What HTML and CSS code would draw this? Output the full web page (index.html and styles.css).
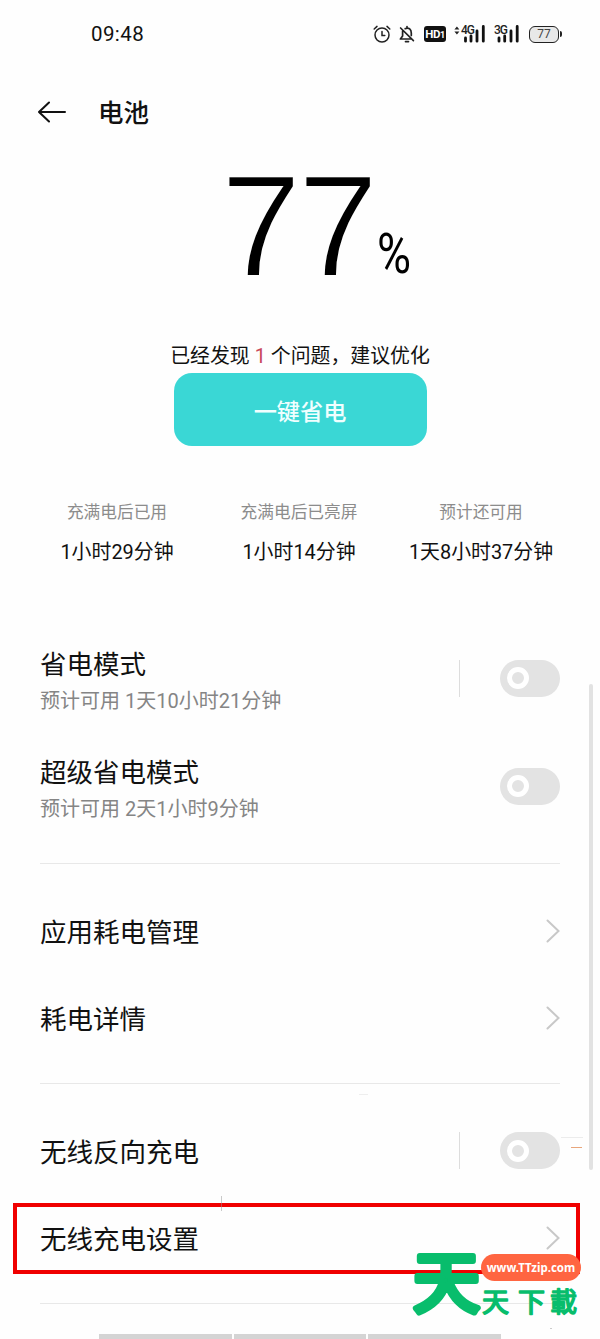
FILE: index.html
```html
<!DOCTYPE html>
<html lang="zh-CN">
<head>
    <meta charset="UTF-8">
    <meta name="viewport" content="width=device-width, initial-scale=1.0">
    <title>电池</title>
    <link rel="stylesheet" href="styles.css">
</head>
<body>
    <div class="status-bar">
        <span class="time">09:48</span>
        <div class="status-icons">
            <svg class="alarm" width="18" height="20" viewBox="0 0 18 20" fill="none" stroke="#222" stroke-width="1.5" stroke-linecap="round">
                <circle cx="9" cy="11" r="7"/>
                <path d="M9 7.5V11.5H11.8M1.2 5L4 2.4M16.8 5L14 2.4"/>
            </svg>
            <svg class="bell" width="16" height="20" viewBox="0 0 16 20" fill="none" stroke="#222" stroke-width="1.7" stroke-linecap="round" stroke-linejoin="round">
                <path d="M6.2 4.6C10 3 12.3 5.6 12.3 9V11.5M3.6 7.2V12L1.4 15H12.5M8 2.5V4M6.5 17.6H9.5M1.6 4L14.4 16.6"/>
            </svg>
            <span class="hd">HD<small>1</small></span>
            <div class="signal signal-4g">
                <svg width="32" height="20" viewBox="0 0 32 20">
                    <path d="M0.4 5.6L2.9 2.6L5.4 5.6ZM0.4 7.4L2.9 10.4L5.4 7.4Z" fill="#222"/>
                    <path d="M11.5 14V17.2M17 12V17.2M23 7V17.2M29.3 2.5V17.2" stroke="#111" stroke-width="2.8" stroke-linecap="round"/>
                </svg>
                <span>4G</span>
            </div>
            <div class="signal signal-3g">
                <svg width="26" height="20" viewBox="0 0 26 20">
                    <path d="M5 14V17.2M10.7 12V17.2M17 7V17.2M23.2 2.5V17.2" stroke="#111" stroke-width="2.8" stroke-linecap="round"/>
                </svg>
                <span>3G</span>
            </div>
            <span class="battery">77</span>
        </div>
    </div>

    <header>
        <svg width="28" height="22" viewBox="0 0 28 22" fill="none" stroke="#111" stroke-width="2" stroke-linecap="round" stroke-linejoin="round">
            <path d="M27 11H1M11 1.5L1 11L11 20.5"/>
        </svg>
        <h1>电池</h1>
    </header>

    <div class="level">
        <span class="number">77</span>
        <span class="percent">%</span>
    </div>

    <p class="tip">已经发现 <b>1</b> 个问题，建议优化</p>
    <button class="save-button">一键省电</button>

    <div class="stats">
        <div class="stat">
            <span class="label">充满电后已用</span>
            <span class="value">1小时29分钟</span>
        </div>
        <div class="stat">
            <span class="label">充满电后已亮屏</span>
            <span class="value">1小时14分钟</span>
        </div>
        <div class="stat">
            <span class="label">预计还可用</span>
            <span class="value">1天8小时37分钟</span>
        </div>
    </div>

    <div class="group modes">
        <div class="row">
            <div class="text">
                <h2>省电模式</h2>
                <p>预计可用 1天10小时21分钟</p>
            </div>
            <i class="split"></i>
            <span class="toggle"></span>
        </div>
        <div class="row">
            <div class="text">
                <h2>超级省电模式</h2>
                <p>预计可用 2天1小时9分钟</p>
            </div>
            <span class="toggle"></span>
        </div>
    </div>

    <div class="group usage">
        <div class="row">
            <h2>应用耗电管理</h2>
            <svg class="arrow" width="14" height="24" viewBox="0 0 14 24"><path d="M1.5 1.5L12.5 12L1.5 22.5"/></svg>
        </div>
        <div class="row">
            <h2>耗电详情</h2>
            <svg class="arrow" width="14" height="24" viewBox="0 0 14 24"><path d="M1.5 1.5L12.5 12L1.5 22.5"/></svg>
        </div>
    </div>

    <div class="group wireless">
        <div class="row">
            <h2>无线反向充电</h2>
            <i class="split"></i>
            <span class="toggle"></span>
        </div>
        <div class="row">
            <h2>无线充电设置</h2>
            <svg class="arrow" width="14" height="24" viewBox="0 0 14 24"><path d="M1.5 1.5L12.5 12L1.5 22.5"/></svg>
        </div>
    </div>

    <div class="nav-bar"><i></i><i></i><i></i></div>

    <!-- things lying over the page -->
    <div class="scrollbar"></div>
    <div class="highlight"></div>
    <div class="mark mark-line"></div>
    <div class="mark mark-side"></div>
    <div class="mark mark-orange"></div>
    <div class="mark mark-top"></div>
    <div class="mark mark-dot"></div>
    <div class="watermark">
        <svg width="174" height="93" viewBox="0 -17 174 93">
            <text class="big" x="3" y="61">天</text>
            <text class="small" x="72 108 140" y="66">天下載</text>
        </svg>
        <span class="site">www.TTzip.com</span>
    </div>
</body>
</html>
```
FILE: styles.css
```css
*, *::before, *::after {
    box-sizing: border-box;
}
body {
    font-family: Roboto, "Noto Sans CJK SC", sans-serif;
    position: relative;
    width: 600px;
    height: 1339px;
    margin: 0;
    overflow: hidden;
    background-color: #fefefe;
    color: #111;
}
h1, h2, p {
    margin: 0;
    font-weight: 400;
}

/* status bar */
.status-bar {
    display: flex;
    align-items: center;
    justify-content: space-between;
    height: 68px;
    padding: 0 38px 0 91px;
}
.time {
    font-size: 20.5px;
    letter-spacing: 0.4px;
}
.status-icons {
    display: flex;
    align-items: center;
}
.bell {
    margin-left: 8px;
}
.hd {
    width: 22px;
    height: 16px;
    margin-left: 9px;
    border-radius: 3px;
    background: #111;
    color: #fff;
    font-size: 11.5px;
    font-weight: 700;
    line-height: 16px;
    text-align: center;
    letter-spacing: -0.5px;
}
.hd small {
    font-size: 9px;
}
.signal {
    position: relative;
    height: 20px;
    margin-left: 8px;
}
.signal svg {
    display: block;
}
.signal span {
    position: absolute;
    top: 0;
    left: 7px;
    color: #222;
    font-size: 12px;
    line-height: 12px;
    letter-spacing: -1px;
    font-weight: 500;
}
.signal-3g span {
    left: 0;
}
.battery {
    position: relative;
    width: 30px;
    height: 17px;
    margin: 0 3px 0 9px;
    border: 1.8px solid #222;
    border-radius: 6px;
    background: #e8e8e8;
    color: #444;
    font-size: 12px;
    line-height: 15px;
    text-align: center;
}
.battery::after {
    content: "";
    position: absolute;
    top: 4px;
    right: -4px;
    width: 2px;
    height: 6px;
    border-radius: 0 2px 2px 0;
    background: #222;
}

header {
    display: flex;
    align-items: center;
    height: 88px;
    padding-left: 38px;
}
h1 {
    margin-left: 32px;
    padding-bottom: 3px;
    font-size: 25.5px;
    font-weight: 500;
}

/* battery level */
.level {
    display: flex;
    height: 185px;
    padding-left: 221px;
    color: #000;
}
.number {
    width: 156px;
    font-family: "Liberation Sans", sans-serif;
    font-size: 144px;
    line-height: 142px;
    letter-spacing: -3px;
    /* page-coloured outline keeps the digits light */
    -webkit-text-stroke: 2px #fefefe;
}
.percent {
    width: 40px;
    padding-top: 68px;
    font-size: 56px;
    line-height: 60px;
    transform: scaleX(0.83);
    transform-origin: 0 0;
}
.tip {
    height: 32px;
    font-size: 19.9px;
    line-height: 32px;
    text-align: center;
}
.save-button {
    display: block;
    width: 253px;
    height: 73px;
    margin: 0 auto;
    padding: 0;
    border: none;
    border-radius: 18px;
    background: #3ad7d5;
    color: #f0ffff;
    font-family: inherit;
    font-size: 23.2px;
    font-weight: 500;
}
.tip b {
    color: #c8475b;
    font-weight: 400;
}
.stats {
    display: flex;
    height: 178px;
    padding: 54px 28px 0 26px;
}
.stat {
    display: flex;
    flex: 1;
    flex-direction: column;
    align-items: center;
    white-space: nowrap;
}
.label {
    height: 40px;
    color: #8c8c8c;
    font-size: 16.7px;
    line-height: 26px;
}
.value {
    font-size: 19.9px;
    line-height: 26px;
}

/* settings list */
.group {
    margin: 0 40px;
    border-bottom: 1px solid #e8e8e8;
}
.row {
    display: flex;
    align-items: center;
    height: 87px;
}
.modes {
    height: 240px;
}
.modes .row {
    height: 108px;
}
.usage {
    height: 220px;
    padding-top: 23px;
}
.wireless {
    height: 220px;
    padding-top: 23px;
}
.row h2 {
    flex: 1;
    padding-top: 4px;
    font-size: 26.5px;
    line-height: 36px;
}
.text {
    flex: 1;
    padding-top: 8px;
}
.row .text h2 {
    padding-top: 2px;
}
.text p {
    color: #858585;
    font-size: 20px;
    line-height: 37px;
}
.split {
    width: 1.5px;
    height: 37px;
    margin-right: 40px;
    background: #ddd;
}
.toggle {
    display: flex;
    align-items: center;
    width: 60px;
    height: 37px;
    padding-left: 7px;
    border-radius: 19px;
    background: #e3e3e3;
}
.toggle::before {
    content: "";
    width: 22px;
    height: 22px;
    border: 5px solid #fff;
    border-radius: 50%;
}
.arrow {
    fill: none;
    stroke: #c8c8c8;
    stroke-width: 2;
    stroke-linecap: round;
}

.nav-bar {
    display: flex;
    gap: 2px;
    margin: 30px 99px 0;
}
.nav-bar i {
    flex: 1;
    height: 5px;
    background: #d4d4d4;
}

.scrollbar {
    position: absolute;
    top: 684px;
    left: 589px;
    width: 4px;
    height: 486px;
    border-radius: 2px;
    background: #e2e2e2;
}
.highlight {
    position: absolute;
    top: 1203px;
    left: 13px;
    width: 567px;
    height: 71px;
    border: 4px solid #f00000;
}
.mark {
    position: absolute;
}
.mark-line {
    top: 1196px;
    left: 221px;
    width: 1px;
    height: 15px;
    background: rgba(150, 150, 150, 0.5);
}
.mark-side {
    top: 1137px;
    left: 561px;
    width: 22px;
    height: 1px;
    background: #ececec;
}
.mark-orange {
    top: 1147px;
    left: 571px;
    width: 11px;
    height: 1px;
    background: #e8a67c;
}
.mark-top {
    top: 1094px;
    left: 359px;
    width: 9px;
    height: 1px;
    background: #eee;
}
.mark-dot {
    top: 1328px;
    left: 550px;
    width: 2px;
    height: 1px;
    background: #ccc;
}

/* site watermark */
.watermark {
    position: absolute;
    top: 1229px;
    left: 410px;
    width: 174px;
    height: 93px;
}
.watermark text {
    fill: #08bd6c;
    stroke: #08bd6c;
    stroke-linejoin: round;
    font-family: "Noto Sans CJK TC", sans-serif;
}
.big {
    font-size: 67px;
    stroke-width: 6px;
}
.small {
    font-size: 27px;
    stroke-width: 1.6px;
}
.site {
    position: absolute;
    top: 25px;
    left: 71px;
    width: 100px;
    height: 27px;
    border-radius: 14px;
    background: #ff6541;
    color: #fff;
    font-family: "Noto Sans", sans-serif;
    font-size: 11.5px;
    font-weight: 700;
    line-height: 27px;
    text-align: center;
}
```
